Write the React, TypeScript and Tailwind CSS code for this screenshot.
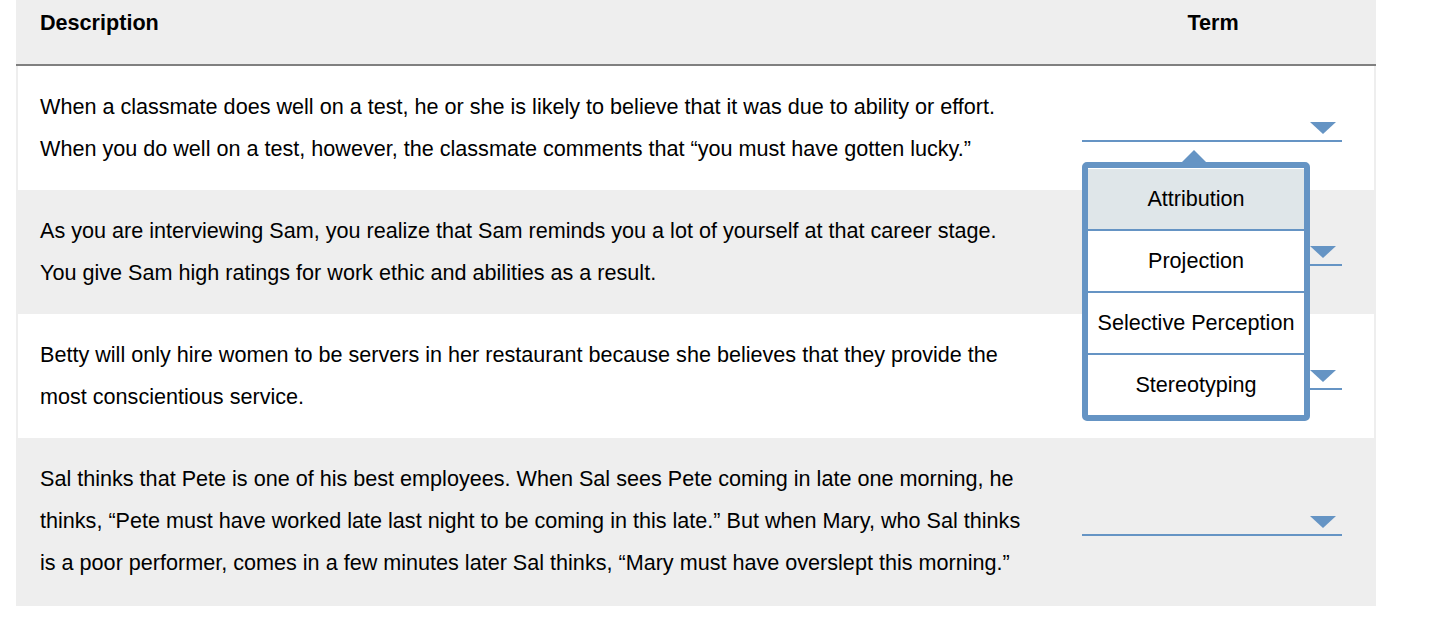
const rows = [
  {
    text: 'When a classmate does well on a test, he or she is likely to believe that it was due to ability or effort. When you do well on a test, however, the classmate comments that “you must have gotten lucky.”',
    shaded: false,
  },
  {
    text: 'As you are interviewing Sam, you realize that Sam reminds you a lot of yourself at that career stage. You give Sam high ratings for work ethic and abilities as a result.',
    shaded: true,
  },
  {
    text: 'Betty will only hire women to be servers in her restaurant because she believes that they provide the most conscientious service.',
    shaded: false,
  },
  {
    text: 'Sal thinks that Pete is one of his best employees. When Sal sees Pete coming in late one morning, he thinks, “Pete must have worked late last night to be coming in this late.” But when Mary, who Sal thinks is a poor performer, comes in a few minutes later Sal thinks, “Mary must have overslept this morning.”',
    shaded: true,
  },
];

const options = ['Attribution', 'Projection', 'Selective Perception', 'Stereotyping'];

const Dropdown = () => (
  <div className="w-[260px] h-[28px] border-b-2 border-[#6594c4] flex items-end justify-end pr-[6px] pb-[6px]">
    <svg width="26" height="12" viewBox="0 0 26 12">
      <polygon points="0,0 26,0 13,12" fill="#6594c4" />
    </svg>
  </div>
);

const App = () => {
  return (
    <div className="min-h-screen bg-white pl-4 text-black font-['Liberation_Sans',Arial,sans-serif]">
      <div className="relative w-[1360px]">
        <div className="flex h-[66px] pt-[2px] bg-[#eeeeee] border-b-2 border-[#808080] text-[21.6px] leading-[42px] font-bold">
          <div className="w-[1034px] pl-6">Description</div>
          <div className="flex-1 text-center">Term</div>
        </div>

        {rows.map((row, i) => (
          <div
            key={i}
            className={`flex border-x-2 border-[#eeeeee] ${row.shaded ? 'bg-[#eeeeee]' : 'bg-white'}`}
          >
            <div
              className={`w-[1032px] pl-[22px] pr-5 pt-5 text-[21.6px] leading-[42px] ${
                i === rows.length - 1 ? 'pb-[22px]' : 'pb-5'
              }`}
            >
              {row.text}
            </div>
            <div className="flex-1 flex items-center justify-center">
              <Dropdown />
            </div>
          </div>
        ))}

        {/* open menu for the first row */}
        <div className="absolute left-[1066px] top-[150px] w-[228px]">
          <svg width="24" height="12" viewBox="0 0 24 12" className="ml-[100px] block">
            <polygon points="0,12 12,0 24,12" fill="#6594c4" />
          </svg>
          <div className="border-[6px] border-[#6594c4] rounded-[5px] bg-white pt-px">
            {options.map((opt, i) => (
              <div
                key={opt}
                className={`flex items-center justify-center text-[21.6px] ${
                  i > 0 ? 'h-[62px] border-t-2 border-[#6594c4]' : 'h-[60px] bg-[#dfe6e9]'
                }`}
              >
                {opt}
              </div>
            ))}
          </div>
        </div>
      </div>
    </div>
  );
};

export default App;
